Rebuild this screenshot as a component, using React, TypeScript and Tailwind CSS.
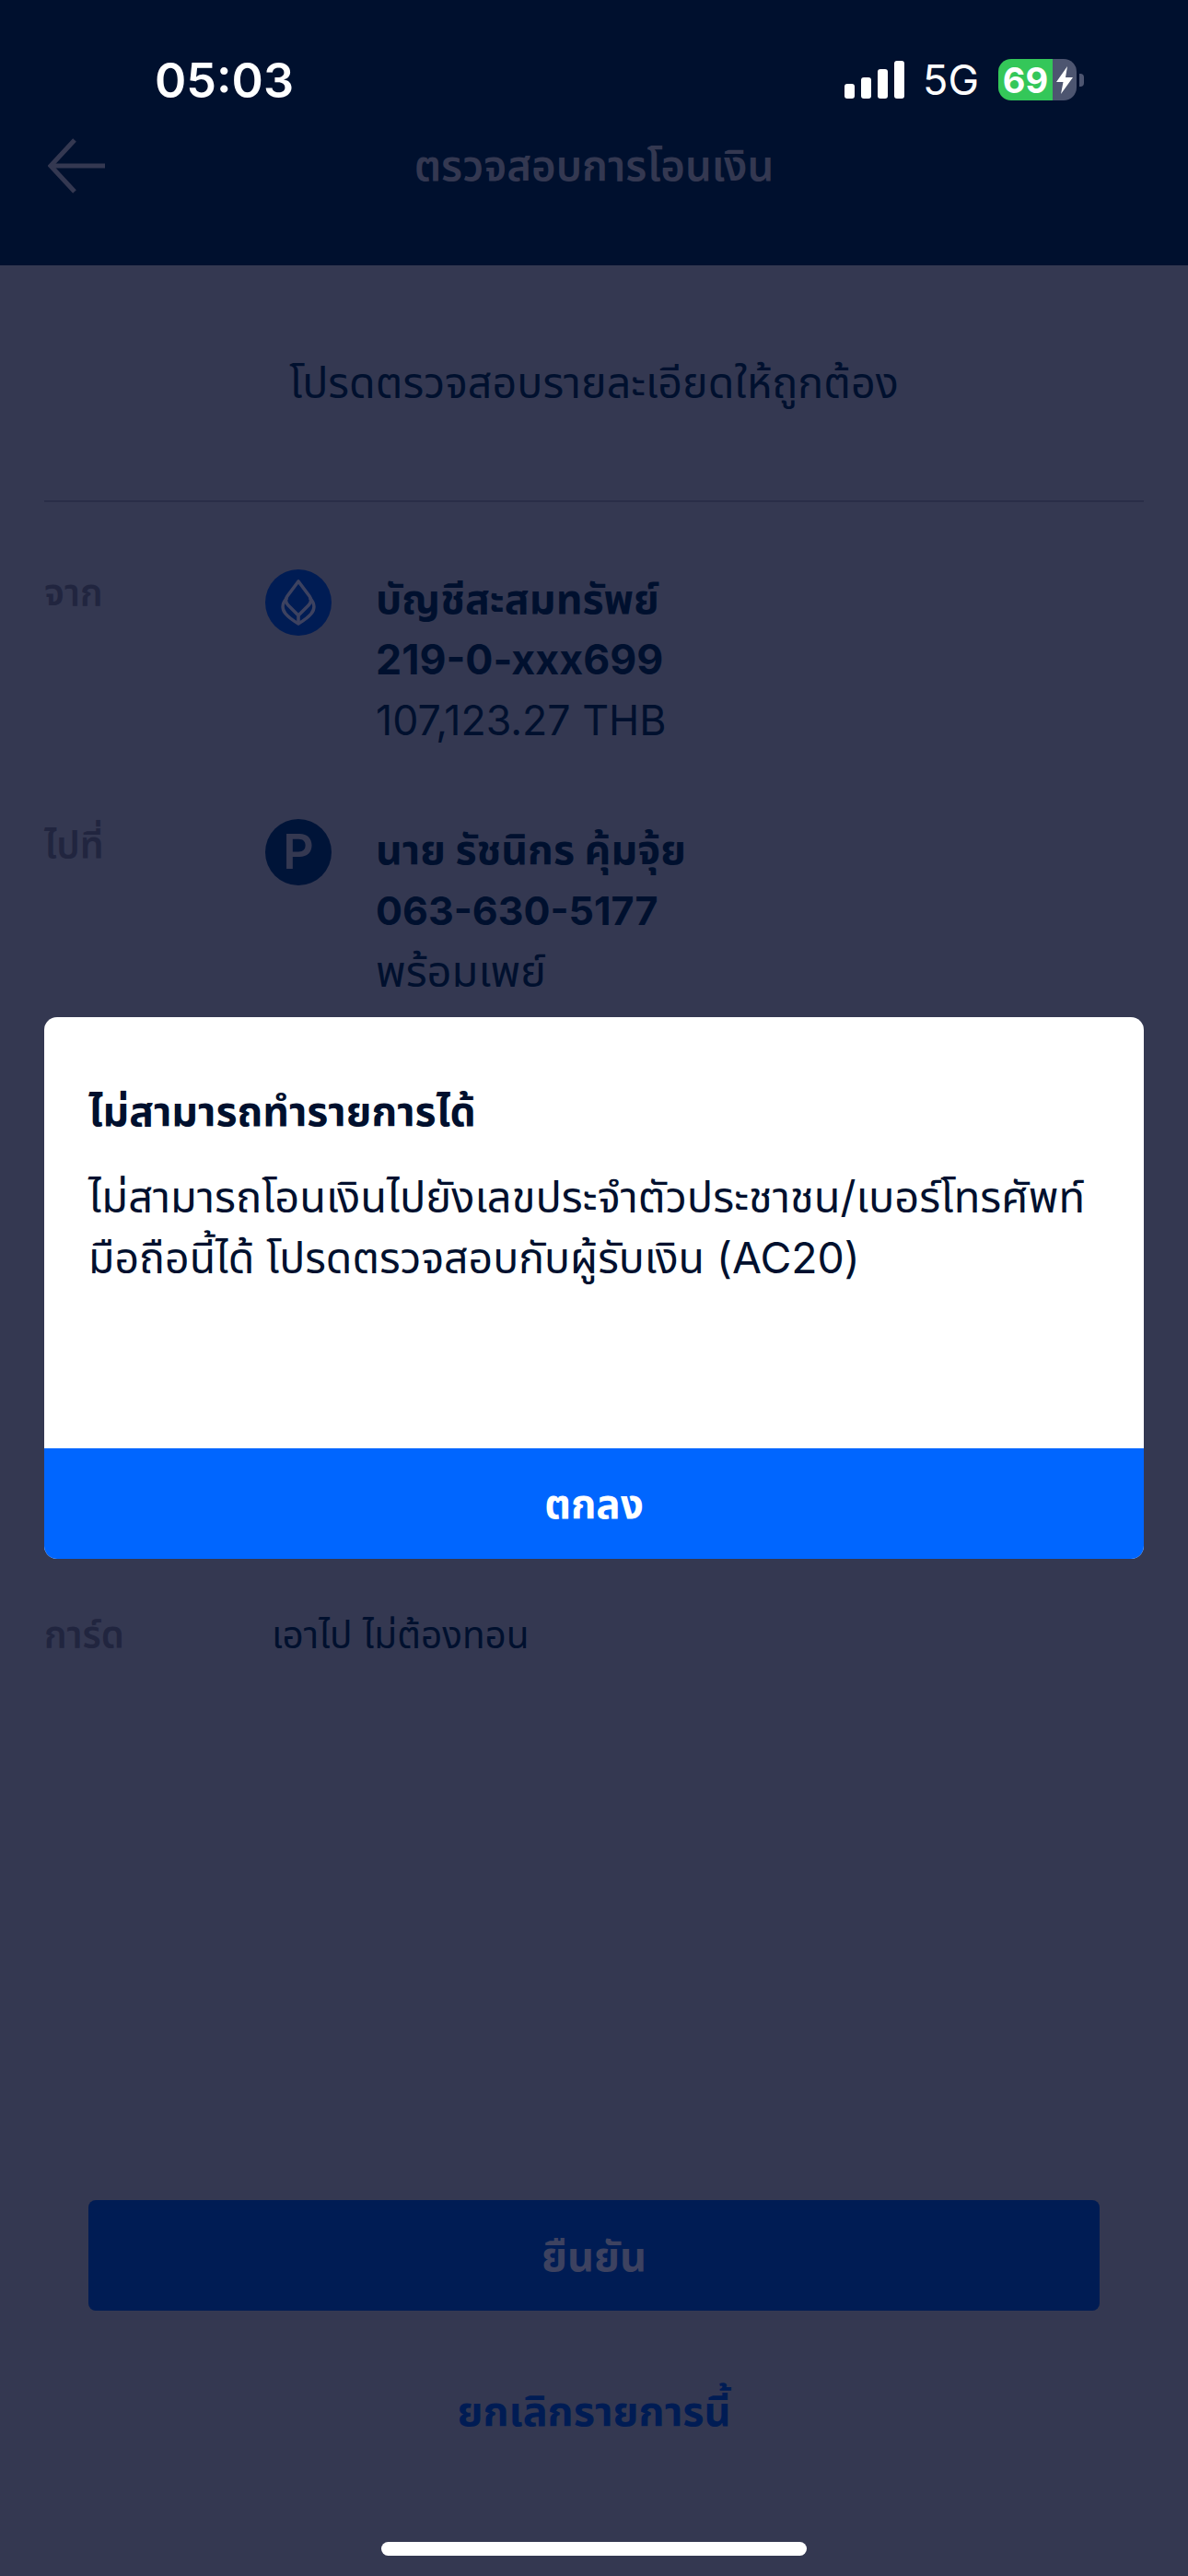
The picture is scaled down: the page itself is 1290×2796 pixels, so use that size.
import React from 'react';

const FONT = "font-['Inter','Noto_Sans','Noto_Sans_Thai','DejaVu_Sans',sans-serif]";

const LeafLogo: React.FC = () => (
    <svg viewBox="0 0 72 72" className="w-[72px] h-[72px]" fill="none" stroke="#3d4260" strokeWidth="3.6" strokeLinejoin="round" strokeLinecap="round">
        <path d="M36 13 L24 29 C21 33 22 36 25 39 L36 50 L47 39 C50 36 51 33 48 29 Z" />
        <path d="M23 32 C18 37 18 43 22 48 C26 53 31 56 36 59 C41 56 46 53 50 48 C54 43 54 37 49 32" />
        <path d="M36 50 L36 58" />
    </svg>
);

const LeafCircle: React.FC = () => (
    <div className="w-[72px] h-[72px] rounded-full bg-[#001c54]">
        <LeafLogo />
    </div>
);

const SignalBars: React.FC = () => (
    <div className="flex items-end gap-[7px] h-[41px]">
        <div className="w-[11px] h-[16px] rounded-[3px] bg-white" />
        <div className="w-[11px] h-[23px] rounded-[3px] bg-white" />
        <div className="w-[11px] h-[32px] rounded-[3px] bg-white" />
        <div className="w-[11px] h-[41px] rounded-[3px] bg-white" />
    </div>
);

const Battery: React.FC = () => (
    <div className="flex items-center">
        <div className="flex w-[85px] h-[45px] rounded-[14px] overflow-hidden">
            <div className="w-[59px] bg-[#34c759] flex items-center justify-center text-white text-[38px] font-bold leading-none">69</div>
            <div className="flex-1 bg-[#4d5570] flex items-center justify-center">
                <svg viewBox="0 0 20 30" className="w-[20px] h-[30px]">
                    <path d="M13 0 L1 17 L8.5 17 L6 30 L19 12 L11 12 Z" fill="#ffffff" />
                </svg>
            </div>
        </div>
        <div className="ml-[3px] w-[5px] h-[14px] rounded-r-[4px] bg-[#4d5570]" />
    </div>
);

export default function App() {
    return (
        <div className={`relative w-[1290px] h-[2796px] flex flex-col overflow-hidden bg-[#343851] ${FONT}`}>
            {/* Header */}
            <div className="h-[288px] bg-[#00102e] shrink-0">
                <div className="flex items-center justify-between pt-[64px] pl-[168px] pr-[113px] h-[109px]">
                    <span className="mt-[3px] text-white text-[52px] font-semibold leading-none">05:03</span>
                    <div className="flex items-center">
                        <SignalBars />
                        <span className="ml-[20px] mr-[21px] text-white text-[45px] leading-none">5G</span>
                        <Battery />
                    </div>
                </div>
                <div className="relative flex items-center justify-center h-[62px] mt-[40px]">
                    <svg viewBox="0 0 64 60" className="absolute left-[52px] top-[1px] w-[64px] h-[60px]" fill="none" stroke="#343851" strokeWidth="5">
                        <path d="M29 2 L3 30 L29 58" />
                        <path d="M3 30 L62 30" />
                    </svg>
                    <span className="text-[#343851] text-[45.5px] font-semibold leading-none">ตรวจสอบการโอนเงิน</span>
                </div>
            </div>

            {/* Body */}
            <div className="flex-1 flex flex-col">
                <div className="h-[255px] flex items-center justify-center text-[#00102e] text-[46.6px] leading-none">
                    โปรดตรวจสอบรายละเอียดให้ถูกต้อง
                </div>
                <div className="mx-[48px] h-[2px] bg-[#2a2e48]" />

                <div className="flex px-[48px] mt-[73px]">
                    <div className="w-[240px] text-[#21253f] text-[40px] font-semibold leading-[46px] pt-[3px]">จาก</div>
                    <LeafCircle />
                    <div className="ml-[48px] -mt-[1px] text-[#00102e] text-[44.7px] leading-[66px]">
                        <div className="font-bold">บัญชีสะสมทรัพย์</div>
                        <div className="font-bold">219-0-xxx699</div>
                        <div>107,123.27 THB</div>
                    </div>
                </div>

                <div className="flex px-[48px] mt-[74px]">
                    <div className="w-[240px] text-[#21253f] text-[41px] font-semibold leading-[46px] pt-[5px]">ไปที่</div>
                    <div className="w-[72px] h-[72px] rounded-full bg-[#001438] flex items-center justify-center text-[#343851] text-[52px] font-semibold leading-none">P</div>
                    <div className="ml-[48px] text-[#00102e] text-[44.6px] leading-[66px]">
                        <div className="font-bold">นาย รัชนิกร คุ้มจุ้ย</div>
                        <div className="font-bold text-[43px]">063-630-5177</div>
                        <div className="text-[47px]">พร้อมเพย์</div>
                    </div>
                </div>

                <div className="flex items-center px-[48px] mt-[663px] text-[40px] leading-[50px]">
                    <div className="w-[247px] text-[#21253f] font-semibold">การ์ด</div>
                    <div className="text-[#00102e] text-[40.5px]">เอาไป ไม่ต้องทอน</div>
                </div>

                <div className="mt-auto mx-[96px] h-[120px] rounded-[8px] bg-[#001c54] flex items-center justify-center text-[#3d4260] text-[45px] font-bold leading-none">
                    ยืนยัน
                </div>
                <div className="mt-[68px] h-[80px] flex items-center justify-center text-[#001c54] text-[45px] font-bold leading-none">
                    ยกเลิกรายการนี้
                </div>
                <div className="mt-[103px] mb-[22px] mx-auto w-[462px] h-[15px] rounded-full bg-white" />
            </div>

            {/* Alert dialog */}
            <div className="absolute left-[48px] top-[1104px] w-[1194px] h-[588px] rounded-[14px] overflow-hidden flex flex-col bg-white">
                <div className="flex-1 px-[48px] pt-[77px] text-[#00102e]">
                    <div className="text-[44.5px] font-bold leading-[50px]">ไม่สามารถทำรายการได้</div>
                    <div className="mt-[35px] text-[47px] leading-[66px]">
                        <div>ไม่สามารถโอนเงินไปยังเลขประจำตัวประชาชน/เบอร์โทรศัพท์</div>
                        <div className="text-[46.4px]">มือถือนี้ได้ โปรดตรวจสอบกับผู้รับเงิน (AC20)</div>
                    </div>
                </div>
                <div className="h-[120px] bg-[#0066ff] flex items-center justify-center text-white text-[44px] font-bold leading-none">ตกลง</div>
            </div>
        </div>
    );
}
